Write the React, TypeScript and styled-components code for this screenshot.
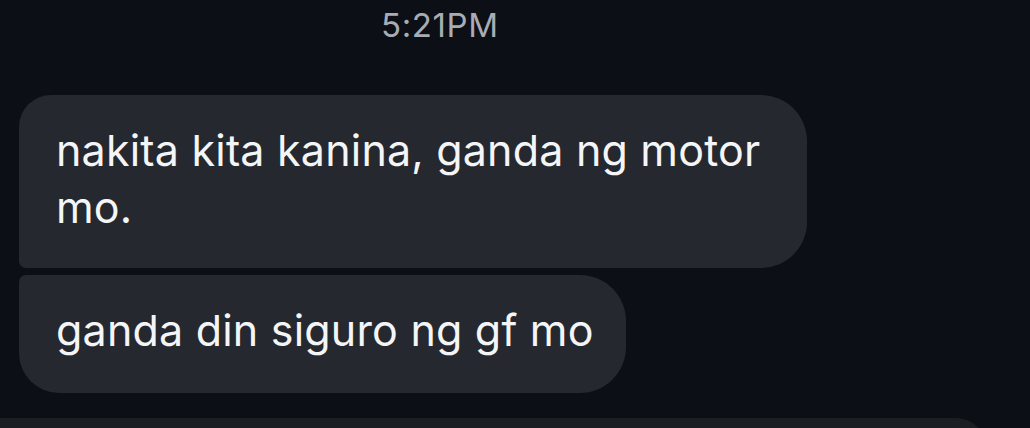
import React from "react";
import styled, { createGlobalStyle } from "styled-components";

const Global = createGlobalStyle`
  html, body {
    margin: 0;
    padding: 0;
    background: #0c0f15;
    overflow: hidden;
  }
  body {
    font-family: Inter, "Noto Sans", "Liberation Sans", sans-serif;
  }
`;

const Screen = styled.div`
  width: 1030px;
  height: 428px;
  background: #0c0f15;
  display: flex;
  flex-direction: column;
  overflow: hidden;
`;

const Stamp = styled.div`
  flex-shrink: 0;
  height: 56px;
  padding-left: 381px;
  padding-top: 5px;
  box-sizing: border-box;
  color: #a8acb4;
  font-size: 33px;
  line-height: 40px;
  letter-spacing: 0.6px;
`;

const Thread = styled.div`
  flex-shrink: 0;
  display: flex;
  flex-direction: column;
  align-items: flex-start;
  gap: 7px;
  padding: 39px 0 0 19px;
`;

const Bubble = styled.div<{ $first?: boolean; $last?: boolean; $w: number; $h: number }>`
  flex-shrink: 0;
  box-sizing: border-box;
  width: ${(p) => p.$w}px;
  height: ${(p) => p.$h}px;
  background: #25282e;
  color: #f4f5f7;
  font-size: 43px;
  letter-spacing: 0.2px;
  line-height: 57px;
  padding: 27px 30px 0 37px;
  border-radius: ${(p) => (p.$first ? "32px" : "7px")} 46px 46px
    ${(p) => (p.$last ? "40px" : "7px")};
`;

const NextBubble = styled.div`
  flex-shrink: 0;
  margin-top: 18px;
  margin-left: -19px;
  width: 986px;
  height: 40px;
  background: #1b1e22;
  border-top-right-radius: 30px;
`;

export default function App() {
  return (
    <Screen>
      <Global />
      <Stamp>5:21PM</Stamp>
      <Thread>
        <Bubble $first $w={788} $h={173}>
          nakita kita kanina, ganda ng motor mo.
        </Bubble>
        <Bubble $last $w={607} $h={118}>
          ganda din siguro ng gf mo
        </Bubble>
        <NextBubble />
      </Thread>
    </Screen>
  );
}
